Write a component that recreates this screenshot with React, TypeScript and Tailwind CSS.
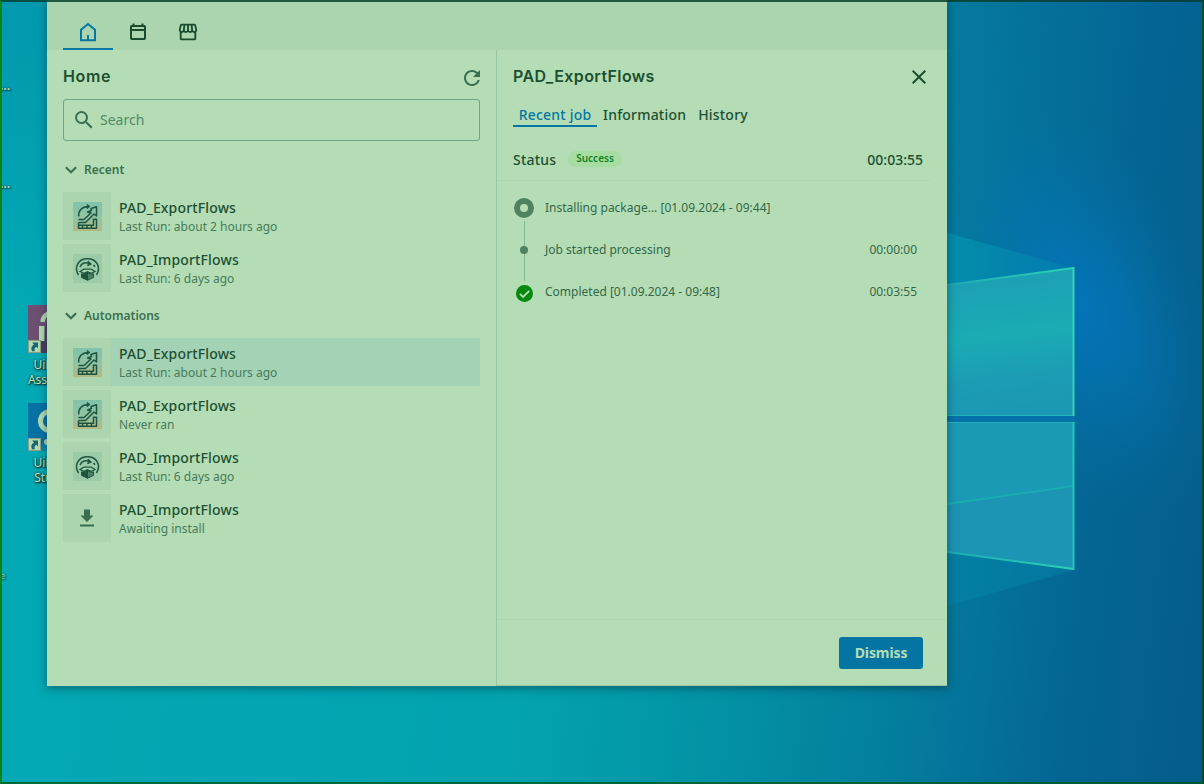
import React from "react";
import { MdOutlineStorefront, MdSearch, MdRefresh, MdClose } from "react-icons/md";

type Kind = "export" | "import" | "download";
type Item = { name: string; sub: string; kind: Kind; selected?: boolean };

const recent: Item[] = [
  { name: "PAD_ExportFlows", sub: "Last Run: about 2 hours ago", kind: "export" },
  { name: "PAD_ImportFlows", sub: "Last Run: 6 days ago", kind: "import" },
];

const automations: Item[] = [
  { name: "PAD_ExportFlows", sub: "Last Run: about 2 hours ago", kind: "export", selected: true },
  { name: "PAD_ExportFlows", sub: "Never ran", kind: "export" },
  { name: "PAD_ImportFlows", sub: "Last Run: 6 days ago", kind: "import" },
  { name: "PAD_ImportFlows", sub: "Awaiting install", kind: "download" },
];

function Wallpaper() {
  return (
    <svg className="absolute inset-0" width="1204" height="784" viewBox="0 0 1204 784">
      <defs>
        <linearGradient id="base" gradientUnits="userSpaceOnUse" x1="0" y1="400" x2="1204" y2="540">
          <stop offset="0" stopColor="#02a9b4" />
          <stop offset="0.45" stopColor="#03a3b0" />
          <stop offset="0.62" stopColor="#0392a5" />
          <stop offset="0.78" stopColor="#047b9c" />
          <stop offset="0.9" stopColor="#046694" />
          <stop offset="1" stopColor="#055d8b" />
        </linearGradient>
        <linearGradient id="topShade" x1="0" y1="0" x2="0" y2="1">
          <stop offset="0" stopColor="#05659a" stopOpacity="0.25" />
          <stop offset="0.4" stopColor="#05659a" stopOpacity="0" />
        </linearGradient>
        <radialGradient id="glow" gradientUnits="userSpaceOnUse" cx="0" cy="0" r="1" gradientTransform="translate(1080 305) rotate(-25) scale(130 230)">
          <stop offset="0" stopColor="#0475bd" stopOpacity="0.85" />
          <stop offset="0.35" stopColor="#0474b6" stopOpacity="0.65" />
          <stop offset="0.7" stopColor="#0472ac" stopOpacity="0.25" />
          <stop offset="1" stopColor="#0470a8" stopOpacity="0" />
        </radialGradient>
        <linearGradient id="pane" x1="0" y1="0" x2="0.1" y2="1">
          <stop offset="0" stopColor="#1d9db5" />
          <stop offset="0.5" stopColor="#1aacb3" />
          <stop offset="0.8" stopColor="#1c9cb5" />
          <stop offset="1" stopColor="#1c98b5" />
        </linearGradient>
        <linearGradient id="edge" gradientUnits="userSpaceOnUse" x1="940" y1="0" x2="1074" y2="0">
          <stop offset="0" stopColor="#1fa6b6" />
          <stop offset="1" stopColor="#2ad3b4" />
        </linearGradient>
        <linearGradient id="ray" gradientUnits="userSpaceOnUse" x1="940" y1="0" x2="1074" y2="0">
          <stop offset="0" stopColor="#0396b4" stopOpacity="0.7" />
          <stop offset="1" stopColor="#0396b4" stopOpacity="0.25" />
        </linearGradient>
      </defs>
      <rect width="1204" height="784" fill="url(#base)" />
      <rect width="1204" height="784" fill="url(#topShade)" />
      <rect x="850" width="354" height="784" fill="url(#glow)" />
      <path d="M940 231L1074 268L940 286Z" fill="url(#ray)" />
      <path d="M940 551L1074 570L940 608Z" fill="#0485ac" fillOpacity="0.5" />
      <path d="M940 286L1074 268V415H940Z" fill="url(#pane)" />
      <path d="M940 286L1074 268" stroke="url(#edge)" strokeWidth="2" />
      <path d="M940 415.5H1074" stroke="#1fb2b6" />
      <path d="M1073.500 267V416" stroke="#35d2b5" strokeWidth="2" />
      <path d="M940 416H1075V422H940Z" fill="#0471a8" />
      <path d="M940 422H1074V570L940 551Z" fill="#1c94b3" />
      <path d="M940 505L1074 486V422H940Z" fill="#1a9ab5" />
      <path d="M940 505L1074 486" stroke="#1aacb3" strokeWidth="2" />
      <path d="M940 422.5H1074" stroke="#1fb2b6" />
      <path d="M940 551L1074 569" stroke="url(#edge)" strokeWidth="2" />
      <path d="M1073.500 422V570" stroke="#22c7b6" strokeWidth="2" />
    </svg>
  );
}

function ShortcutBadge() {
  return (
    <svg className="absolute bottom-0 left-0" width="13" height="13" viewBox="0 0 13 13">
      <rect x="0.5" y="0.5" width="12" height="12" fill="#b3dbb0" stroke="#8c9f86" />
      <path d="M4 2.500H10V8.500L8.300 6.800Q5.900 8 6.800 11.200H4Q2 6.800 6 4.500Z" fill="#1c6474" />
    </svg>
  );
}

function DesktopIcon({ line1, line2, variant }: { line1: string; line2: string; variant: "assistant" | "studio" }) {
  return (
    <div className="flex w-16 flex-col items-center">
      <div className="relative h-12 w-12">
        {variant === "assistant" ? (
          <svg width="48" height="48" viewBox="0 0 48 48">
            <rect width="48" height="48" fill="#6d4f72" />
            <path d="M19 16L10 48H48V8Z" fill="#4d3f5e" />
            <path d="M14.500 17a8 10 0 0 1 10-8.500" stroke="#b3dbb0" strokeWidth="4.500" fill="none" />
            <path d="M11 21h5.500v15H11z" fill="#b3dbb0" />
          </svg>
        ) : (
          <svg width="48" height="48" viewBox="0 0 48 48">
            <rect width="48" height="48" fill="#0571a5" />
            <path d="M8 48L34 24L48 40V48Z" fill="#0586b1" />
            <circle cx="22" cy="18" r="9.500" fill="none" stroke="#b3dbb0" strokeWidth="5" />
            <circle cx="19" cy="39" r="3" fill="#b3dbb0" />
          </svg>
        )}
        <ShortcutBadge />
      </div>
      <div className="mt-[4px] text-center text-[12px] leading-[15px] tracking-[-0.1px] text-[#c2e4b8] [text-shadow:1px_1px_1px_#003c3c,0_0_2px_#003c3c,0_1px_3px_#003c3c]">
        <div>{line1}</div>
        <div className={variant === "assistant" ? "pl-[2px]" : ""}>{line2}</div>
      </div>
    </div>
  );
}

function HomeIcon() {
  return (
    <svg width="18" height="20" viewBox="0 0 18 20" fill="none" stroke="#0477a3" strokeWidth="2">
      <path d="M2 18.200V7.800L9 2l7 5.800v10.400z" />
      <path d="M9 13v5" />
    </svg>
  );
}

function CalendarIcon() {
  return (
    <svg width="18" height="20" viewBox="0 0 18 20" fill="none" stroke="#1a4b2c" strokeWidth="2">
      <rect x="2" y="4" width="14" height="13" rx="0.8" />
      <path d="M2 8h14M4.500 1.500v2.500M13.500 1.500v2.500" />
    </svg>
  );
}

function Chevron() {
  return (
    <svg width="12" height="8" viewBox="0 0 12 8" fill="none" stroke="#3c704f" strokeWidth="2.200">
      <path d="M0.900 1.200l5.100 5 5.100-5" />
    </svg>
  );
}

function ExportArt() {
  return (
    <svg width="29" height="29" viewBox="0 0 29 29" fill="none" stroke="#1d5540" strokeWidth="1.500" strokeLinejoin="round">
      <defs>
        <linearGradient id="art" x1="0" y1="0" x2="0" y2="1">
          <stop offset="0" stopColor="#80c3ab" />
          <stop offset="0.6" stopColor="#95c3a2" />
          <stop offset="1" stopColor="#b4b883" />
        </linearGradient>
      </defs>
      <rect width="29" height="29" fill="url(#art)" stroke="none" />
      <path d="M5.700 14.500C5.200 8.500 9 4.500 15.500 4.500M13.800 2.500l2.500 2-2.500 2" />
      <path d="M5.500 17.500h5.500l7-6.500-3.500-1 4-1.500-.5-2L23.500 4.800V14l-2.500-2L12.500 20.500H5.500" />
      <path d="M5.500 20.800v5.400h18v-9h-3v6h-15M9.500 24v2M14 24v2M18.500 24v2" />
    </svg>
  );
}

function ImportArt() {
  return (
    <svg width="29" height="29" viewBox="0 0 29 29" fill="none" stroke="#1d5540" strokeWidth="1.500">
      <rect width="29" height="29" fill="#9ccba8" stroke="none" />
      <path d="M5.500 21C0.500 13 5.500 4.800 14.500 4.800S28.500 13 23.500 21" />
      <path d="M7 13c1.500-4 6-5.500 10-3M14.800 7.200l3 2.800-3.500 1.500M20.500 11l1.500 1.800" />
      <path d="M7 17.500l4-2.300h7l4 2.300-4 1.800-3.500-1.600-3.500 1.600z" fill="#a9d5ad" strokeWidth="1.200" />
      <path d="M8.500 19.800v3.600l6 2.800v-8l-3.500 2z" fill="#1d5540" strokeWidth="1" />
      <path d="M14.500 18.200v8l6-2.800v-3.600l-2.500.6z" fill="#4c8166" strokeWidth="1" />
    </svg>
  );
}

function DownloadArt() {
  return (
    <svg width="16" height="18" viewBox="0 0 16 18" fill="#3a6e51" className="mr-px">
      <path d="M5 0.500h6v6h3.500l-6.500 6.500-6.500-6.500h3.500zM1 15.500h14v2H1z" />
    </svg>
  );
}

function Row({ item }: { item: Item }) {
  return (
    <div className={item.selected ? "flex h-12 bg-[#a4d2b5]" : "flex h-12"}>
      <div className="flex h-12 w-12 items-center justify-center bg-[#abd5ae] pl-px">
        {item.kind === "export" && <ExportArt />}
        {item.kind === "import" && <ImportArt />}
        {item.kind === "download" && <DownloadArt />}
      </div>
      <div className="pt-[6px] pl-2">
        <div className="text-sm leading-5 font-medium tracking-[0.15px] text-[#1d4f31]">{item.name}</div>
        <div className="text-xs leading-[17px] text-[#477b5a]">{item.sub}</div>
      </div>
    </div>
  );
}

function Section({ title, items }: { title: string; items: Item[] }) {
  return (
    <div>
      <div className="flex h-6 items-center gap-[7px] pl-[2px] text-xs font-semibold text-[#3c704f]">
        <Chevron />
        {title}
      </div>
      <div className="mt-[10px] flex flex-col gap-1">
        {items.map((it, i) => (
          <Row key={i} item={it} />
        ))}
      </div>
    </div>
  );
}

function Step({ marker, label, time }: { marker: React.ReactNode; label: string; time?: string }) {
  return (
    <div className="flex h-[42px] items-center text-xs text-[#356749]">
      <div className="flex w-[22px] shrink-0 justify-center">{marker}</div>
      <div className="ml-[10px] flex-1">{label}</div>
      <div>{time}</div>
    </div>
  );
}

export default function App() {
  return (
    <div className="relative h-[784px] w-[1204px] overflow-hidden font-['Noto_Sans',sans-serif]">
      <Wallpaper />

      <div className="absolute top-[305px] left-5 flex flex-col gap-4">
        <DesktopIcon line1="UiPath" line2="Assistant" variant="assistant" />
        <DesktopIcon line1="UiPath" line2="Studio" variant="studio" />
      </div>
      <div className="absolute top-[78px] left-0 text-[12px] leading-4 font-bold tracking-tighter text-[#b3dbb0] [text-shadow:1px_1px_2px_#003c3c,0_0_2px_#003c3c]">…</div>
      <div className="absolute top-[176px] left-0 text-[12px] leading-4 font-bold tracking-tighter text-[#b3dbb0] [text-shadow:1px_1px_2px_#003c3c,0_0_2px_#003c3c]">…</div>
      <div className="absolute top-[568px] left-0 text-[9px] leading-4 text-[#8fc4a0] [text-shadow:1px_1px_2px_#003c3c]">e</div>

      <div className="absolute top-0 left-[47px] flex h-[686px] w-[900px] flex-col bg-[#b4ddb5] shadow-[0_2px_9px_rgba(0,40,50,0.5)]">
        <div className="flex h-[50px] shrink-0 items-end bg-[#abd5ae] pl-4">
          <div className="flex h-[38px] w-[50px] items-center justify-center border-b-2 border-[#0477a3] pt-1">
            <HomeIcon />
          </div>
          <div className="flex h-[38px] w-[50px] items-center justify-center pt-[2px]">
            <CalendarIcon />
          </div>
          <div className="flex h-[38px] w-[50px] items-center justify-center pt-[2px]">
            <MdOutlineStorefront size={22} color="#1a4b2c" />
          </div>
        </div>

        <div className="flex min-h-0 flex-1">
          <div className="w-[450px] border-r border-[#98c6a2] pr-4 pl-4">
            <div className="flex h-[49px] items-center justify-between pt-[2px]">
              <h1 className="text-base font-semibold tracking-[0.65px] text-[#1d4f31] font-['Inter','Noto_Sans',sans-serif]">Home</h1>
              <MdRefresh size={24} color="#3a6e51" className="-mr-1 mt-[4px]" />
            </div>
            <div className="flex h-[42px] items-center rounded-[3px] border border-[#6fa682] pl-2 text-sm text-[#538865]">
              <MdSearch size={24} color="#3a6e51" />
              <span className="ml-1">Search</span>
            </div>
            <div className="mt-[17px] flex flex-col gap-3">
              <Section title="Recent" items={recent} />
              <Section title="Automations" items={automations} />
            </div>
          </div>

          <div className="flex w-[450px] flex-col border-b border-[#98c6a2]">
            <div className="flex h-[52px] items-center justify-between pr-4 pl-4">
              <h2 className="text-base font-semibold tracking-[0.4px] text-[#1d4f31] font-['Inter','Noto_Sans',sans-serif]">PAD_ExportFlows</h2>
              <MdClose size={24} color="#1d4f31" className="mt-[2px]" />
            </div>
            <div className="flex h-[25px] pl-4 text-sm leading-[26px] font-medium tracking-[0.2px] text-[#1d4f31]">
              <div className="w-[84px] border-b-2 border-[#0477a3] text-center text-[#0477a3]">Recent job</div>
              <div className="ml-[6px]">Information</div>
              <div className="ml-3">History</div>
            </div>
            <div className="mr-4 flex h-[54px] items-center border-b border-[#aed8b1] pt-[12px] pr-2 pl-4 text-sm font-medium text-[#1d4f31]">
              <span className="tracking-[0.2px]">Status</span>
              <span className="mb-[2px] ml-3 flex h-4 items-center rounded-full bg-[#a7dca2] px-2 text-[10px] font-semibold text-[#128529]">Success</span>
              <span className="ml-auto">00:03:55</span>
            </div>
            <div className="relative mt-[6px] pr-[30px] pl-4">
              <div className="absolute top-[34px] left-[27px] h-[60px] w-px bg-[#83b891]" />
              <Step
                marker={<div className="h-5 w-5 rounded-full border-[6px] border-[#4f825f] bg-[#b4ddb5]" />}
                label="Installing package... [01.09.2024 - 09:44]"
              />
              <Step marker={<div className="relative h-2 w-2 rounded-full bg-[#4f825f]" />} label="Job started processing" time="00:00:00" />
              <Step
                marker={
                  <svg width="17" height="17" viewBox="0 0 17 17" className="relative top-px left-[0.5px]">
                    <circle cx="8.5" cy="8.5" r="8.500" fill="#038a0c" />
                    <path d="M3.800 8.800l3.300 3.200 6.100-6.200" fill="none" stroke="#b4ddb5" strokeWidth="1.800" />
                  </svg>
                }
                label="Completed [01.09.2024 - 09:48]"
                time="00:03:55"
              />
            </div>
            <div className="mt-auto flex h-[66px] items-center justify-end border-t border-[#aed8b1] pr-6">
              <button className="h-8 w-[84px] rounded-[3px] bg-[#0475a3] text-sm font-bold tracking-[-0.1px] text-[#b4ddb5]">Dismiss</button>
            </div>
          </div>
        </div>
      </div>

      <div className="absolute inset-0 border-2 border-t-[#003c2a]/80 border-r-[#004a25]/90 border-b-[#005a1e]/80 border-l-[#08851a]" />
    </div>
  );
}
